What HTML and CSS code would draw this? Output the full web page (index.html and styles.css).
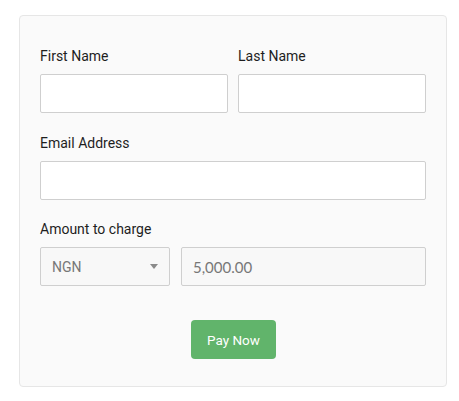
FILE: index.html
```html
<!DOCTYPE html>
<html lang="en">
<head>
<meta charset="utf-8">
<title>Payment</title>
<link rel="stylesheet" href="styles.css">
</head>
<body>
<div class="page">
  <form class="card">
    <div class="row two">
      <div class="field">
        <label class="label">First Name</label>
        <input class="input" type="text">
      </div>
      <div class="field">
        <label class="label">Last Name</label>
        <input class="input" type="text">
      </div>
    </div>
    <div class="row tight">
      <div class="field">
        <label class="label">Email Address</label>
        <input class="input" type="text">
      </div>
    </div>
    <div class="row">
      <div class="field">
        <label class="label">Amount to charge</label>
        <div class="amount">
          <div class="select">
            <span class="select-text">NGN</span>
            <svg class="caret" width="8" height="5" viewBox="0 0 8 5"><path d="M0 0H8L4 5Z" fill="#8a8a8a"/></svg>
          </div>
          <div class="input muted">5,000.00</div>
        </div>
      </div>
    </div>
    <div class="actions">
      <button class="btn" type="button">Pay Now</button>
    </div>
  </form>
</div>
</body>
</html>
```
FILE: styles.css
```css
* { box-sizing: border-box; }
html, body { margin: 0; background: #fff; }
body { font-family: Roboto, "Noto Sans", sans-serif; color: #333; }
.page { padding: 15px 12px 14px 19px; }
.card {
  width: 428px;
  background: #fafafa;
  border: 1px solid #e6e6e6;
  border-radius: 4px;
  padding: 30px 20px 27px;
}
.row { margin-bottom: 20px; }
.row.tight { margin-bottom: 19px; }
.row.two { display: grid; grid-template-columns: 1fr 1fr; gap: 10px; }
.field { display: flex; flex-direction: column; }
.label {
  font-size: 14px;
  line-height: 20px;
  margin-bottom: 8px;
  color: #1e1e1e;
  font-weight: 400;
}
.input {
  height: 39px;
  width: 100%;
  border: 1px solid #cfcfcf;
  border-radius: 2px;
  background: #fff;
  font-family: inherit;
  font-size: 14px;
  margin: 0;
  padding: 0 10px;
}
.amount { display: grid; grid-template-columns: 130px 1fr; gap: 11px; }
.select {
  height: 39px;
  border: 1px solid #cfcfcf;
  border-radius: 2px;
  background: #f8f8f8;
  display: flex;
  align-items: center;
  justify-content: space-between;
  padding: 0 11px 0 11px;
  font-size: 14px;
  color: #777;
}
.caret { display: block; }
.input.muted {
  background: #f8f8f8;
  display: flex;
  align-items: center;
  font-family: Lato, Roboto, sans-serif;
  font-size: 15px;
  color: #777;
  padding: 0 11px;
}
.actions { display: flex; justify-content: center; padding-top: 14px; }
.btn {
  width: 85px;
  height: 39px;
  background: #61b46b;
  border: 0;
  border-radius: 4px;
  color: #fff;
  font-family: inherit;
  font-size: 13.5px;
  font-weight: 400;
  margin-left: 1px;
}
```
